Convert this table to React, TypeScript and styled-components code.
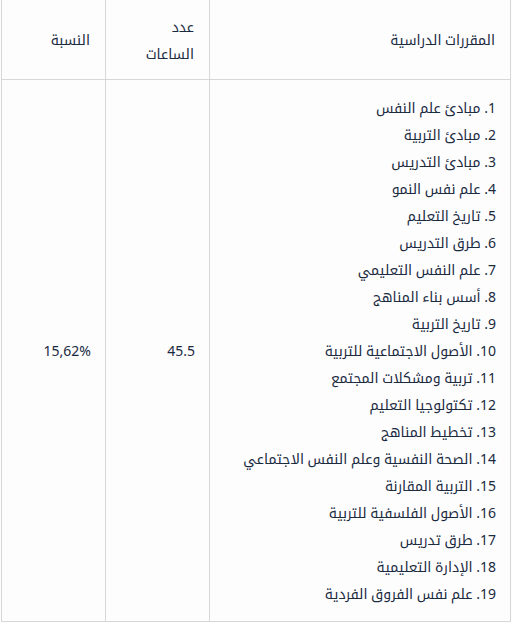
import styled, { createGlobalStyle } from "styled-components";

const GlobalStyle = createGlobalStyle`
  html, body {
    margin: 0;
    padding: 0;
    background: #fdfdfe;
  }
  body {
    font-family: "Noto Sans", "Noto Kufi Arabic", "Droid Arabic Kufi", "Noto Sans Arabic UI", "Noto Sans Arabic", "DejaVu Sans", sans-serif;
    color: #1a2a3f;
  }
`;

const Page = styled.div`
  padding-left: 1px;
  margin-top: -1px;
`;

const Table = styled.table`
  direction: rtl;
  width: 510px;
  border-collapse: collapse;
  font-size: 14px;
  line-height: 27px;
`;

const HeadCell = styled.th`
  border: 1px solid #d6d7d9;
  padding: 12px 15px 12px 15px;
  height: 55px;
  text-align: right;
  font-weight: 400;
  vertical-align: middle;
`;

const Cell = styled.td<{ width?: number }>`
  border: 1px solid #d6d7d9;
  padding: 14px 14px;
  text-align: right;
  vertical-align: middle;
  width: ${(props) => (props.width ? `${props.width}px` : "auto")};
`;

const CourseList = styled.ol`
  margin: 0;
  padding: 0;
  list-style-position: inside;
`;

const Course = styled.li`
  white-space: nowrap;
`;

const courses = [
  "مبادئ علم النفس",
  "مبادئ التربية",
  "مبادئ التدريس",
  "علم نفس النمو",
  "تاريخ التعليم",
  "طرق التدريس",
  "علم النفس التعليمي",
  "أسس بناء المناهج",
  "تاريخ التربية",
  "الأصول الاجتماعية للتربية",
  "تربية ومشكلات المجتمع",
  "تكتولوجيا التعليم",
  "تخطيط المناهج",
  "الصحة النفسية وعلم النفس الاجتماعي",
  "التربية المقارنة",
  "الأصول الفلسفية للتربية",
  "طرق تدريس",
  "الإدارة التعليمية",
  "علم نفس الفروق الفردية",
];

const App = () => {
  return (
    <Page>
      <GlobalStyle />
      <Table>
        <thead>
          <tr>
            <HeadCell>المقررات الدراسية</HeadCell>
            <HeadCell>
              عدد
              <br />
              الساعات
            </HeadCell>
            <HeadCell>النسبة</HeadCell>
          </tr>
        </thead>
        <tbody>
          <tr>
            <Cell>
              <CourseList>
                {courses.map((c) => (
                  <Course key={c}>{c}</Course>
                ))}
              </CourseList>
            </Cell>
            <Cell width={75}>45.5</Cell>
            <Cell width={75}>15,62%</Cell>
          </tr>
        </tbody>
      </Table>
    </Page>
  );
};

export default App;
